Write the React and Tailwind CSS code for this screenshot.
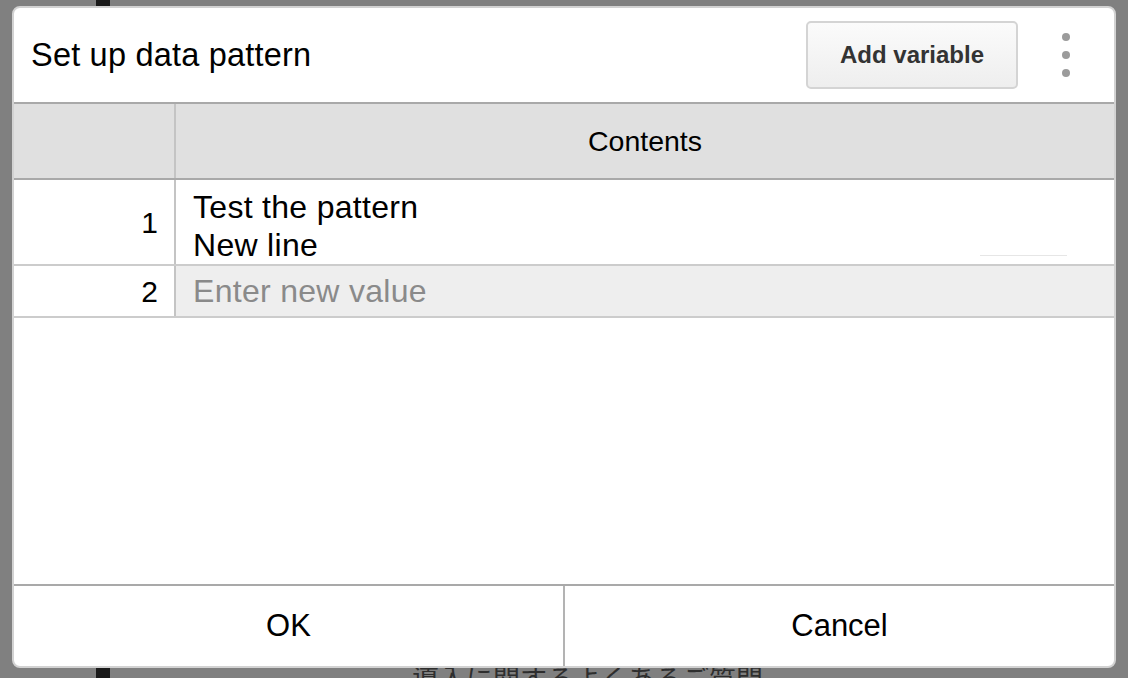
export default function App() {
  return (
    <div
      className="relative flex h-[678px] w-[1128px] overflow-hidden bg-[#808080]"
      style={{ fontFamily: '"Liberation Sans", Arial, sans-serif' }}
    >
      <div className="ml-[96px] h-full w-[14px] bg-[#1a1a1a]" />
      <div
        className="pl-[302px] pt-[661px] text-[27px] leading-[34px] whitespace-nowrap text-[#2e2e2e]"
        style={{ fontFamily: '"Noto Sans CJK JP", "Liberation Sans", sans-serif' }}
      >
        導入に関するよくあるご質問
      </div>

      <div className="absolute left-[12px] top-[6px] flex h-[662px] w-[1104px] flex-col overflow-hidden rounded-[8px] border-2 border-[#d2d2d2] bg-white text-black">
        {/* Header */}
        <div className="flex h-[96px] shrink-0 items-center border-b-2 border-[#a9a9a9] pl-[17px]">
          <div className="flex-1 text-[32.5px] leading-none tracking-[0.2px]">Set up data pattern</div>
          <button className="flex h-[68px] w-[212px] items-center justify-center rounded-[5px] border-2 border-[#d4d4d4] bg-gradient-to-b from-[#fbfbfb] to-[#eeeeee] text-[24px] font-bold text-[#333]">
            Add variable
          </button>
          <div className="ml-[44px] mr-[44px] flex flex-col gap-[10px]">
            <span className="block h-[8px] w-[8px] rounded-full bg-[#9b9b9b]" />
            <span className="block h-[8px] w-[8px] rounded-full bg-[#9b9b9b]" />
            <span className="block h-[8px] w-[8px] rounded-full bg-[#9b9b9b]" />
          </div>
        </div>

        {/* Table header */}
        <div className="flex h-[76px] shrink-0 border-b-2 border-[#a9a9a9] bg-[#e0e0e0]">
          <div className="w-[162px] shrink-0 border-r-2 border-[#c4c4c4]" />
          <div className="flex flex-1 items-center justify-center text-[28.5px]">Contents</div>
        </div>

        {/* Row 1 */}
        <div className="flex h-[86px] shrink-0 border-b-2 border-[#cccccc]">
          <div className="flex w-[162px] shrink-0 items-center justify-end border-r-2 border-[#c4c4c4] pr-[16px] text-[30px]">
            1
          </div>
          <div className="relative flex-1 pl-[17px] pt-[8px] text-[32px] leading-[38px] tracking-[0.3px]">
            <div>Test the pattern</div>
            <div>New line</div>
            <div className="absolute left-[804px] top-[75px] h-px w-[87px] bg-[#e6e6e6]" />
          </div>
        </div>

        {/* Row 2 */}
        <div className="flex h-[52px] shrink-0 border-b-2 border-[#cccccc]">
          <div className="flex w-[162px] shrink-0 items-center justify-end border-r-2 border-[#c4c4c4] pr-[16px] text-[30px]">
            2
          </div>
          <div className="flex flex-1 items-center bg-[#eeeeee] pl-[17px] text-[32px] tracking-[0.3px] text-[#8a8a8a]">
            Enter new value
          </div>
        </div>

        <div className="flex-1" />

        {/* Footer */}
        <div className="flex h-[82px] shrink-0 border-t-2 border-[#a9a9a9]">
          <button className="flex flex-1 items-center justify-center border-r-2 border-[#b3b3b3] text-[31px]">
            OK
          </button>
          <button className="flex flex-1 items-center justify-center text-[31px]">Cancel</button>
        </div>
      </div>
    </div>
  );
}
